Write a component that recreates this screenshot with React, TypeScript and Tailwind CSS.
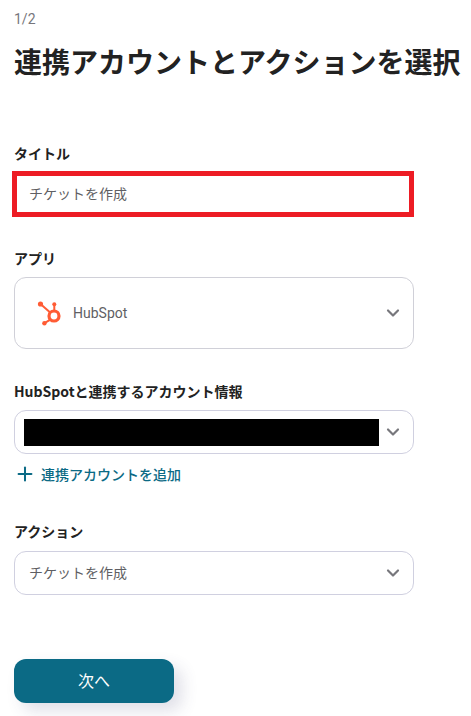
import React from 'react';
import { ChevronDown, Plus } from 'lucide-react';

const font = "font-['Noto_Sans_CJK_JP','Noto_Sans',sans-serif]";

const HubSpotLogo: React.FC = () => (
  <svg width="28" height="28" viewBox="0 0 28 28" fill="none">
    <circle cx="4.5" cy="5" r="2.6" fill="#ff5c35" />
    <circle cx="18.3" cy="5.2" r="2" fill="#ff5c35" />
    <circle cx="8.4" cy="24.2" r="2.2" fill="#ff5c35" />
    <circle cx="18" cy="17" r="5" stroke="#ff5c35" strokeWidth="3.2" />
    <path d="M4.5 5L14.2 13.5M18.3 5.2V12M8.4 24.2L14.4 20.6" stroke="#ff5c35" strokeWidth="2" />
  </svg>
);

const Chevron: React.FC = () => (
  <ChevronDown className="h-5 w-5 text-[#77777c]" strokeWidth={2.6} />
);

const FieldLabel: React.FC<{ children: React.ReactNode }> = ({ children }) => (
  <p className="text-sm leading-5 font-bold text-[#222222]">{children}</p>
);

const App: React.FC = () => {
  return (
    <div className={`h-[716px] w-[471px] overflow-hidden bg-white px-3.5 ${font}`}>
      <p className="pt-[9px] font-['Roboto',sans-serif] text-sm leading-5 text-[#77777c]">1/2</p>
      <h1 className="mt-[12px] text-[28px] leading-[40px] font-bold whitespace-nowrap text-[#222222]">
        連携アカウントとアクションを選択
      </h1>

      {/* タイトル */}
      <div className="mt-[62px]">
        <FieldLabel>タイトル</FieldLabel>
        <div className="mt-[8px] -ml-0.5 flex h-[46px] w-[402px] items-center border-[5px] border-[#ed1c24] pb-[3px] pl-[12px] text-sm text-[#5f5f64]">
          チケットを作成
        </div>
      </div>

      {/* アプリ */}
      <div className="mt-[31px]">
        <FieldLabel>アプリ</FieldLabel>
        <div className="mt-[9px] flex h-[72px] w-[400px] items-center justify-between rounded-xl border border-[#d0d0d8] pr-[10px] pl-[21px]">
          <div className="flex items-center gap-[9px]">
            <HubSpotLogo />
            <span className="font-['Roboto',sans-serif] text-sm text-[#5f5f64]">HubSpot</span>
          </div>
          <Chevron />
        </div>
      </div>

      {/* アカウント情報 */}
      <div className="mt-[32px]">
        <FieldLabel>HubSpotと連携するアカウント情報</FieldLabel>
        <div className="mt-[9px] flex h-[44px] w-[400px] items-center justify-between rounded-xl border border-[#d0d0e0] pr-[10px] pl-[9px]">
          <div className="h-[27px] w-[355px] bg-black" />
          <Chevron />
        </div>
        <div className="mt-[9px] flex items-center gap-[5px] text-[#0b6a85]">
          <Plus className="h-[22px] w-[22px]" strokeWidth={2.2} />
          <span className="text-sm leading-5 font-medium">連携アカウントを追加</span>
        </div>
      </div>

      {/* アクション */}
      <div className="mt-[36px]">
        <FieldLabel>アクション</FieldLabel>
        <div className="mt-[10px] flex h-[44px] w-[400px] items-center justify-between rounded-xl border border-[#d0d0e0] pr-[10px] pl-[14px]">
          <span className="pb-[2px] text-sm text-[#5f5f64]">チケットを作成</span>
          <Chevron />
        </div>
      </div>

      <button className="mt-[64px] h-[44px] w-[160px] rounded-xl bg-[#0b6a85] pb-[2px] text-base text-white shadow-[8px_8px_16px_rgba(60,60,110,0.16)]">
        次へ
      </button>
    </div>
  );
};

export default App;
